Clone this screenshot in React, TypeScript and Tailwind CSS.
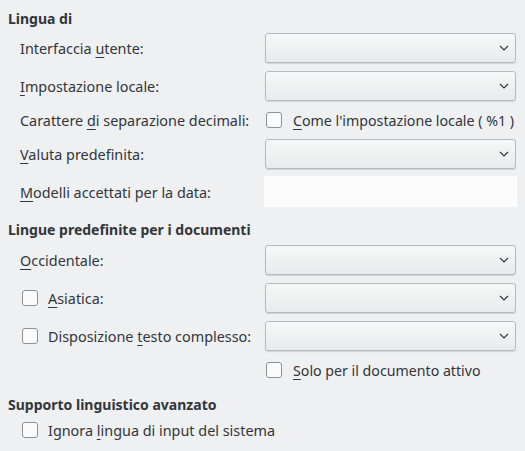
import React from "react";

const Combo = () => (
  <div className="h-[30px] w-[251px] rounded-[3px] border border-[#b7b9bb] bg-gradient-to-b from-[#f6f7f7] to-[#e9eaeb] shadow-[0_1px_1px_rgba(0,0,0,0.12)] flex items-center justify-end pr-[6px]">
    <svg width="10" height="6" viewBox="0 0 10 6" fill="none">
      <path d="M1 1 L5 5 L9 1" stroke="#31363b" strokeWidth="1.1" />
    </svg>
  </div>
);

const Check = () => (
  <div className="w-[16px] h-[16px] rounded-[3px] border border-[#8e9194] bg-[#fbfbfb] shrink-0" />
);

const U = ({ children }: { children: React.ReactNode }) => (
  <span className="underline decoration-1 underline-offset-[3px]">{children}</span>
);

const Label = ({ children, check }: { children: React.ReactNode; check?: boolean }) =>
  check ? (
    <div className="flex items-center gap-[10px] pl-[14px] text-[14.4px]">
      <Check />
      <span>{children}</span>
    </div>
  ) : (
    <div className="pl-[12px] text-[14.4px]">{children}</div>
  );

export default function App() {
  return (
    <div
      className="w-[525px] h-[451px] bg-[#eff0f1] text-[#31363b] text-[14px] leading-[19px] pl-[8px] pt-[8px] overflow-hidden"
      style={{ fontFamily: '"Noto Sans", "Open Sans", sans-serif' }}
    >
      <div className="font-bold h-[20px] flex items-center">Lingua di</div>
      <div className="grid grid-cols-[257px_252px] items-center gap-y-[8px] mt-[5px]">
        <Label>
          Interfaccia <U>u</U>tente:
        </Label>
        <Combo />
        <Label>
          <U>I</U>mpostazione locale:
        </Label>
        <Combo />
        <Label>
          Carattere <U>d</U>i separazione decimali:
        </Label>
        <div className="h-[22px] flex items-center gap-[11px] pl-[1px] text-[14.2px] whitespace-nowrap">
          <Check />
          <span>
            <U>C</U>ome l'impostazione locale ( %1 )
          </span>
        </div>
        <Label>
          <U>V</U>aluta predefinita:
        </Label>
        <Combo />
        <Label>
          <U>M</U>odelli accettati per la data:
        </Label>
        <div className="h-[31px] w-[253px] -ml-[1px] bg-[#fcfcfc] -mt-[1px]" />
      </div>

      <div className="font-bold h-[20px] flex items-center mt-[12px]">
        Lingue predefinite per i documenti
      </div>
      <div className="grid grid-cols-[257px_252px] items-center gap-y-[8px] mt-[6px]">
        <Label>
          <U>O</U>ccidentale:
        </Label>
        <Combo />
        <Label check>
          <U>A</U>siatica:
        </Label>
        <Combo />
        <Label check>
          Disposizione <U>t</U>esto complesso:
        </Label>
        <Combo />
        <div />
        <div className="h-[22px] flex items-center gap-[11px] pl-[1px] text-[14.2px]">
          <Check />
          <span>
            <U>S</U>olo per il documento attivo
          </span>
        </div>
      </div>

      <div className="font-bold h-[20px] flex items-center mt-[13px]">
        Supporto linguistico avanzato
      </div>
      <div className="mt-[5px] h-[22px] flex items-center">
        <Label check>
          Ignora <U>l</U>ingua di input del sistema
        </Label>
      </div>
    </div>
  );
}
